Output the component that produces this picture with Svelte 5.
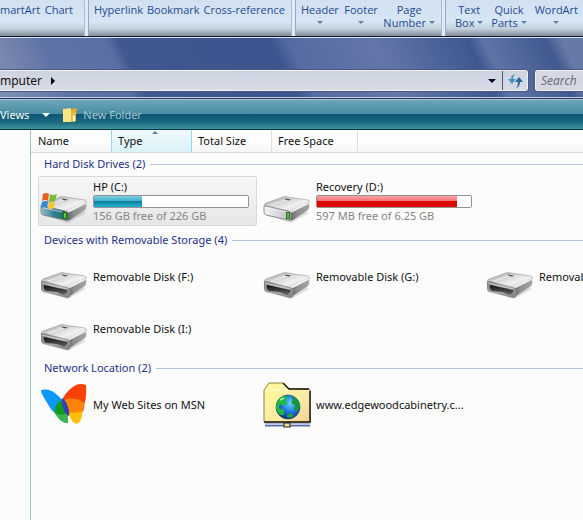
<script lang="ts">
	type Item = { name: string; icon: string; free?: string; used?: number; low?: boolean; selected?: boolean };
	type Group = { title: string; items: Item[] };

	const ribbon = [
		{ cls: 'illustrations', items: [{ lines: ['martArt'] }, { lines: ['Chart'] }] },
		{ cls: 'links', items: [{ lines: ['Hyperlink'] }, { lines: ['Bookmark'] }, { lines: ['Cross-reference'] }] },
		{
			cls: 'header-footer',
			items: [
				{ lines: ['Header', ''], menu: true },
				{ lines: ['Footer', ''], menu: true },
				{ lines: ['Page', 'Number'], menu: true }
			]
		},
		{
			cls: 'text',
			items: [
				{ lines: ['Text', 'Box'], menu: true },
				{ lines: ['Quick', 'Parts'], menu: true },
				{ lines: ['WordArt', ''], menu: true }
			]
		}
	];

	const columns = ['Name', 'Type', 'Total Size', 'Free Space'];
	let sorted = $state('Type');

	const groups: Group[] = [
		{
			title: 'Hard Disk Drives (2)',
			items: [
				{ name: 'HP (C:)', icon: 'system', free: '156 GB free of 226 GB', used: 31, selected: true },
				{ name: 'Recovery (D:)', icon: 'drive', free: '597 MB free of 6.25 GB', used: 91, low: true }
			]
		},
		{
			title: 'Devices with Removable Storage (4)',
			items: [
				{ name: 'Removable Disk (F:)', icon: 'removable' },
				{ name: 'Removable Disk (G:)', icon: 'removable' },
				{ name: 'Removable Disk (H:)', icon: 'removable' },
				{ name: 'Removable Disk (I:)', icon: 'removable' }
			]
		},
		{
			title: 'Network Location (2)',
			items: [
				{ name: 'My Web Sites on MSN', icon: 'msn' },
				{ name: 'www.edgewoodcabinetry.c...', icon: 'webfolder' }
			]
		}
	];
</script>

<svg class="defs" width="0" height="0" aria-hidden="true">
	<defs>
		<linearGradient id="top" x1="0" y1="0" x2="1" y2="1">
			<stop offset="0" stop-color="#8d8d8d" />
			<stop offset=".3" stop-color="#cdcdcd" />
			<stop offset=".6" stop-color="#f1f1f1" />
			<stop offset="1" stop-color="#b4b4b4" />
		</linearGradient>
		<linearGradient id="side" x1="0" y1="0" x2="1" y2="0">
			<stop offset="0" stop-color="#5c5c5c" />
			<stop offset=".4" stop-color="#8f8f8f" />
			<stop offset="1" stop-color="#a4a4a4" />
		</linearGradient>
		<linearGradient id="front" x1="0" y1="0" x2="1" y2="0">
			<stop offset="0" stop-color="#f4f4f8" />
			<stop offset="1" stop-color="#b9b9c4" />
		</linearGradient>
		<linearGradient id="rim" x1="0" y1="0" x2="1" y2="1">
			<stop offset="0" stop-color="#7b7b7b" />
			<stop offset=".5" stop-color="#a8a8a8" />
			<stop offset="1" stop-color="#7d7d7d" />
		</linearGradient>
		<linearGradient id="slot" x1="0" y1="0" x2="0" y2="1">
			<stop offset="0" stop-color="#111" />
			<stop offset="1" stop-color="#666" />
		</linearGradient>
		<linearGradient id="teal" x1="0" y1="0" x2="1" y2="0">
			<stop offset="0" stop-color="#9dbccb" />
			<stop offset=".5" stop-color="#2c7d92" />
			<stop offset="1" stop-color="#176e4c" />
		</linearGradient>
		<linearGradient id="folder" x1="0" y1="0" x2="1" y2="1">
			<stop offset="0" stop-color="#fffa9b" />
			<stop offset=".6" stop-color="#fbeba6" />
			<stop offset="1" stop-color="#f5cf96" />
		</linearGradient>
		<radialGradient id="sea" cx=".6" cy=".35" r=".7">
			<stop offset="0" stop-color="#6ed3fa" />
			<stop offset=".5" stop-color="#1d78e2" />
			<stop offset="1" stop-color="#07277e" />
		</radialGradient>
	</defs>
</svg>

{#snippet icon(kind: string)}
	<svg class="icon" viewBox="0 0 48 48" aria-hidden="true">
		{#if kind === 'msn'}
			<path d="M1 9 Q9 7 15 12 Q20 16 23 20 L18 34 Q12 31 9 25 Q6 20 3 15 Q1 12 1 9Z" fill="#0d98f4" />
			<path d="M23 17 Q28 8 36 4 Q41 2 46 4 Q47 18 43 27 L32 30 Q24 25 23 17Z" fill="#fb4205" />
			<path d="M24 19 Q36 15 44 22 Q46 28 41 33 L28 33Z" fill="#fd8209" />
			<path d="M28 31 Q36 33 42 30 Q43 36 39 42 Q36 44 33 41 Q30 37 28 31Z" fill="#ffbd08" />
			<path d="M22 19 Q14 22 15 32 L21 36 L28 33Z" fill="#119b1f" />
			<path d="M14 31 Q21 36 28 32 L28 42 Q23 43 18 37Z" fill="#3eb352" />
			<path d="M22 17 Q26 19 28 26 Q30 32 29 35 Q25 33 23 27 Q21 21 22 17Z" fill="#3341b5" />
		{:else if kind === 'webfolder'}
			<path d="M1 41 V9 L6 2 H20 L26 8 H46 L48 10 V41Z" fill="url(#folder)" stroke="#8b8141" />
			<path d="M2 9 H25" stroke="#fffcd2" fill="none" />
			<path d="M1 41 H47 V10 M20 2 L26 8 H46" fill="none" stroke="#191810" stroke-width="1.5" />
			<circle cx="25" cy="26" r="12" fill="url(#sea)" stroke="#153c4b" stroke-width=".6" />
			<path d="M13 25 Q14 18 20 15 L25 16 L22 19 L25 22 L20 25 L17 23 L16 27 L21 29 L21 34 L17 34 Q13 30 13 25Z" fill="#21b743" />
			<path d="M28 15 Q36 18 37 25 L34 31 L31 28 L32 24 L28 22 L30 19Z" fill="#159638" />
			<path d="M23 35 L28 32 L31 35 Q27 38 23 35Z" fill="#20a93a" />
			<path d="M17 19 L21 17" stroke="#a8f79a" stroke-width="1.5" />
			<path d="M2 44 H47" stroke="#5a6aa8" stroke-width="3" />
			<path d="M2 43.5 H47" stroke="#c3caef" />
			<rect x="21" y="42" width="6" height="4" fill="#ece28b" stroke="#222" />
		{:else}
			<path d="M3 38 L28 46 L46 36 L38 31Z" fill="#000" opacity=".12" />
			<path d="M1 29 Q1 27 3 26 L20 20 Q22 19 25 20 L45 23 Q47 24 46 26 L29 36 L2 31Z" fill="url(#top)" stroke="#888" stroke-width=".5" />
			<path d="M27 35 L46 25 Q47 30 45 33 L30 43 L26 44Z" fill="url(#side)" />
			<path d="M28 35 L46 26" stroke="#fff" stroke-width="1.5" opacity=".8" />
			<path d="M22 21.5 L28 22.5 L26 23.5 L22 22.5Z" fill="#4d4d4d" />
			<path d="M8 28 L23 23 M30 34 L42 27" stroke="#fff" stroke-width=".8" opacity=".8" />
			{#if kind === 'removable'}
				<path d="M1 29 L3 28 L27 34 Q30 35 30 37 V44 L27 45 L3 39 Q1 38 1 36Z" fill="url(#rim)" />
				<path d="M2 30 L27 36" stroke="#dadada" stroke-width=".8" />
				<path d="M4 32 L27 37 Q28 38 27 39 L24 42 L17 39 L6 38 Q3 36 4 32Z" fill="url(#slot)" />
			{:else}
				<path
					d="M1 30 Q1 28 3 29 L25 34 Q28 35 28 37 V41 Q28 44 25 43 L3 38 Q1 37 1 35Z"
					fill={kind === 'system' ? 'url(#teal)' : 'url(#front)'}
					stroke="#777"
					stroke-width=".8"
				/>
				<path d="M4 31 L22 35" stroke="#fff" opacity=".6" />
				<rect x="23" y="35" width="4" height="7" rx="1" fill="#2c6a1c" />
				<path d="M25 36 V41" stroke="#6be834" stroke-width="1.5" />
			{/if}
			{#if kind === 'system'}
				<path d="M3 17 Q6 15 9 17 L8 24 Q5 22 2 24Z" fill="#ee5a22" />
				<path d="M10 17 Q13 19 17 17 L15 24 Q12 26 9 24Z" fill="#78bd34" />
				<path d="M2 25 Q5 23 8 25 L7 31 Q4 29 1 31Z" fill="#3089d9" />
				<path d="M9 25 Q12 27 15 25 L14 31 Q10 33 8 31Z" fill="#fbc52c" />
			{/if}
		{/if}
	</svg>
{/snippet}

<div class="screen">
	<div class="ribbon">
		{#each ribbon as group}
			<div class="ribbon-group {group.cls}">
				{#each group.items as item}
					<button>
						{#each item.lines as line, i}
							<span class="line">
								{line}
								{#if item.menu && i === 1}<i class="caret"></i>{/if}
							</span>
						{/each}
					</button>
				{/each}
			</div>
		{/each}
	</div>

	<div class="glass">
		<div class="nav">
			<div class="address">
				<button class="crumb">mputer <i class="right"></i></button>
				<button class="history" aria-label="Previous locations"><i class="down"></i></button>
				<button class="refresh" aria-label="Refresh">
					<svg viewBox="0 0 16 16" aria-hidden="true">
						<path d="M8 1 Q4 2 4 6 H1 L5 11 L9 6 H6 Q6 3 8 1Z" fill="#3f96b6" />
						<path d="M9 15 Q13 14 13 9 H16 L12 4 L8 9 H11 Q11 13 9 15Z" fill="#2e659e" />
					</svg>
				</button>
			</div>
			<input class="search" type="text" placeholder="Search" aria-label="Search" />
		</div>
	</div>

	<div class="toolbar">
		<button class="views">Views <i class="down light"></i></button>
		<button class="new-folder" disabled>
			<svg viewBox="0 0 16 16" aria-hidden="true">
				<path d="M1 2 L9 1 V15 H1Z" fill="#f7e583" />
				<path d="M9 3 H14 V14 L9 15Z" fill="#e3bd4a" />
				<path d="M11 8 L13 9 V14 L11 15Z" fill="#fff3c2" />
				<path d="M12 0 L13 2 L16 2 L14 4 L15 7 L12 5 L10 6 L11 3 L9 1 L12 2Z" fill="#f5a92c" />
			</svg>
			New Folder
		</button>
	</div>

	<div class="body">
		<div class="sidebar"></div>
		<main>
			<div class="columns">
				{#each columns as column}
					<button class:sorted={sorted === column} onclick={() => (sorted = column)}>{column}</button>
				{/each}
			</div>
			{#each groups as group}
				<section>
					<h2>{group.title}</h2>
					<div class="tiles">
						{#each group.items as item}
							<button class="tile" class:selected={item.selected}>
								{@render icon(item.icon)}
								<span class="info">
									<span class="name">{item.name}</span>
									{#if item.free}
										<span class="bar" class:low={item.low}>
											<span class="fill" style="width: {item.used}%"></span>
										</span>
										<span class="free">{item.free}</span>
									{/if}
								</span>
							</button>
						{/each}
					</div>
				</section>
			{/each}
		</main>
	</div>
</div>

<style>
	:global(body) {
		margin: 0;
		background: #fcfcfc;
	}
	.defs {
		position: absolute;
	}
	.screen {
		display: flex;
		flex-direction: column;
		min-height: 100vh;
		overflow: hidden;
		font: 11px/14px 'Noto Sans', 'Open Sans', sans-serif;
		color: #111;
	}
	button,
	input {
		box-sizing: border-box;
		margin: 0;
		padding: 0;
		border: 0;
		background: none;
		font: inherit;
		color: inherit;
		white-space: nowrap;
	}

	.ribbon {
		display: flex;
		height: 36px;
		border-bottom: 1px solid #101827;
		background: linear-gradient(#d2e1f2, #d6e6f4 60%, #c3d0dc 80%, #7f8b98);
		color: #264a90;
		font-family: 'Open Sans', 'Noto Sans', sans-serif;
		line-height: 13px;
	}
	.ribbon-group {
		display: flex;
		align-items: flex-start;
		justify-content: space-between;
		flex: none;
		box-sizing: border-box;
		padding: 3px 6px 0;
		border-right: 1px solid #93a9c6;
		box-shadow: inset -3px 0 #dfeaf6, inset -4px 0 #a9bdd6;
	}
	.illustrations {
		width: 89px;
		padding: 3px 15px 0 0;
	}
	.links {
		width: 207px;
		padding-left: 5px;
		padding-right: 10px;
	}
	.header-footer {
		width: 150px;
		padding-left: 5px;
		padding-right: 10px;
	}
	.text {
		flex: 1 0 137px;
		padding: 3px 5px 0 9px;
		border: 0;
		box-shadow: none;
	}
	.line {
		display: flex;
		align-items: center;
		justify-content: center;
		gap: 3px;
		height: 13px;
	}
	.caret {
		border: 3px solid transparent;
		border-top-color: #6a7fa5;
		border-bottom: 0;
	}

	.glass {
		border-top: 1px solid #dbe5f5;
		border-bottom: 1px solid #27335c;
		background: linear-gradient(
			64deg,
			#8290b4,
			#6a7ba8 48px,
			#5f74a6 60px,
			#5a6fa3 120px,
			#40578f 132px,
			#3d548f 268px,
			#566ba2 284px,
			#6476a8 360px,
			#3d5891 446px,
			#5f74a7 460px,
			#41598f 515px,
			#6779a6 530px
		);
	}
	.nav {
		display: flex;
		gap: 7px;
		padding: 32px 0 6px;
		border-bottom: 1px solid #c7d0e3;
	}
	.address {
		display: flex;
		flex: 1;
		height: 21px;
		box-sizing: border-box;
		border: 1px solid #eef1f8;
		border-left: 0;
		border-radius: 0 2px 2px 0;
		outline: 1px solid #4b5a83;
		background: linear-gradient(#cdd3e0, #d9dbe6);
	}
	.crumb {
		display: flex;
		align-items: center;
		gap: 9px;
		flex: 1;
		font-size: 12px;
		text-align: left;
	}
	.right {
		border: 4px solid transparent;
		border-left-color: #000;
		border-right: 0;
	}
	.down {
		border: 4px solid transparent;
		border-top-color: #05052d;
		border-bottom: 0;
	}
	.light {
		border-top-color: #fff;
	}
	.history {
		display: flex;
		align-items: center;
		justify-content: center;
		width: 20px;
	}
	.refresh {
		display: flex;
		align-items: center;
		justify-content: center;
		width: 25px;
		border-left: 1px solid #4b5a83;
	}
	.refresh svg,
	.new-folder svg {
		width: 16px;
		height: 16px;
	}
	.search {
		width: 48px;
		height: 21px;
		padding-left: 5px;
		border: 1px solid #eef1f8;
		border-right: 0;
		border-radius: 2px 0 0 2px;
		outline: 1px solid #4b5a83;
		background: #d5d8e3;
		font-size: 12px;
		font-style: italic;
	}
	.search::placeholder {
		color: #6c6f7a;
		opacity: 1;
	}

	.toolbar {
		display: flex;
		align-items: center;
		gap: 12px;
		height: 29px;
		border-top: 1px solid #a8c6d4;
		border-bottom: 1px solid #0a3445;
		background: linear-gradient(#6ea5b9, #478ca1 50%, #0f5674 50%, #19687f 75%, #3f969d);
		color: #fff;
	}
	.toolbar button {
		display: flex;
		align-items: center;
	}
	.views {
		gap: 13px;
	}
	.new-folder {
		gap: 5px;
		color: #a5c8d0;
	}

	.body {
		display: flex;
		flex: 1;
	}
	.sidebar {
		flex: none;
		width: 30px;
		border-right: 1px solid #a3bfcd;
	}
	main {
		flex: 1;
		min-width: 0;
		overflow: hidden;
	}
	.columns {
		display: flex;
		height: 22px;
		margin-bottom: 1px;
		padding-left: 1px;
		border-bottom: 1px solid #d9d9d9;
		background: linear-gradient(#fff 50%, #f4f5f6);
	}
	.columns button {
		position: relative;
		width: 80px;
		padding: 0 6px;
		border-right: 1px solid #dedfe1;
		text-align: left;
	}
	.columns .sorted {
		border-right-color: #9bd8ec;
		box-shadow: -1px 0 #9bd8ec;
		background: linear-gradient(#f0fafd, #d9f1f9);
	}
	.columns button:last-child {
		width: 86px;
	}
	.sorted::after {
		content: '';
		position: absolute;
		top: 1px;
		left: 50%;
		border: 3px solid transparent;
		border-top: 0;
		border-bottom-color: #4e8396;
	}

	section {
		padding: 0 0 4px 7px;
	}
	h2 {
		display: flex;
		align-items: center;
		gap: 5px;
		height: 20px;
		margin: 0 0 2px 6px;
		font-size: 11px;
		font-weight: 400;
		color: #1e3287;
		white-space: nowrap;
	}
	h2::after {
		content: '';
		flex: 1;
		height: 1px;
		background: #b3c5d6;
	}
	.tiles {
		display: grid;
		grid-template-columns: repeat(3, 219px);
		gap: 2px 4px;
	}
	.tile {
		display: flex;
		align-items: center;
		gap: 5px;
		height: 50px;
		padding-left: 1px;
		border: 1px solid transparent;
		border-radius: 2px;
		text-align: left;
	}
	.selected {
		border-color: #d9d9d9;
		background: linear-gradient(#f8f8f8, #e6e6e6);
	}
	.icon {
		flex: none;
		width: 48px;
		height: 48px;
	}
	.info {
		display: flex;
		flex-direction: column;
		gap: 1px;
	}
	.bar {
		width: 154px;
		height: 11px;
		border: 1px solid #929292;
		border-radius: 2px;
		background: #fff;
	}
	.fill {
		display: block;
		height: 100%;
		background: linear-gradient(#7fd0e2, #35abc9 50%, #0d7fa3 50%, #22b2cf);
	}
	.low .fill {
		background: linear-gradient(#fba5a5, #f36a6a 50%, #d90404 50%, #e20d0d);
	}
	.free {
		color: #858585;
	}
</style>
